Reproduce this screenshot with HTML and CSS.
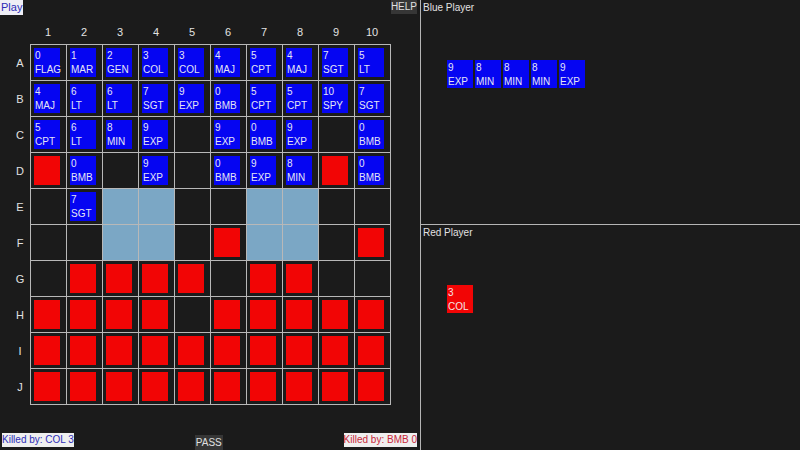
FILE: index.html
```html
<!DOCTYPE html>
<html>
<head>
<meta charset="utf-8">
<link rel="stylesheet" href="styles.css">
</head>
<body>
<div class="app">
  <div class="left">
    <div class="topbar">
      <span class="btn-play">Play</span>
      <span class="btn-dark">HELP</span>
    </div>
    <div class="colnums">
      <span>1</span><span>2</span><span>3</span><span>4</span><span>5</span><span>6</span><span>7</span><span>8</span><span>9</span><span>10</span>
    </div>
    <div class="boardwrap">
      <div class="rowlabels">
        <span>A</span><span>B</span><span>C</span><span>D</span><span>E</span><span>F</span><span>G</span><span>H</span><span>I</span><span>J</span>
      </div>
      <div class="board">
        <!-- A -->
        <div class="cell"><div class="piece blue">0<br>FLAG</div></div>
        <div class="cell"><div class="piece blue">1<br>MAR</div></div>
        <div class="cell"><div class="piece blue">2<br>GEN</div></div>
        <div class="cell"><div class="piece blue">3<br>COL</div></div>
        <div class="cell"><div class="piece blue">3<br>COL</div></div>
        <div class="cell"><div class="piece blue">4<br>MAJ</div></div>
        <div class="cell"><div class="piece blue">5<br>CPT</div></div>
        <div class="cell"><div class="piece blue">4<br>MAJ</div></div>
        <div class="cell"><div class="piece blue">7<br>SGT</div></div>
        <div class="cell"><div class="piece blue">5<br>LT</div></div>
        <!-- B -->
        <div class="cell"><div class="piece blue">4<br>MAJ</div></div>
        <div class="cell"><div class="piece blue">6<br>LT</div></div>
        <div class="cell"><div class="piece blue">6<br>LT</div></div>
        <div class="cell"><div class="piece blue">7<br>SGT</div></div>
        <div class="cell"><div class="piece blue">9<br>EXP</div></div>
        <div class="cell"><div class="piece blue">0<br>BMB</div></div>
        <div class="cell"><div class="piece blue">5<br>CPT</div></div>
        <div class="cell"><div class="piece blue">5<br>CPT</div></div>
        <div class="cell"><div class="piece blue">10<br>SPY</div></div>
        <div class="cell"><div class="piece blue">7<br>SGT</div></div>
        <!-- C -->
        <div class="cell"><div class="piece blue">5<br>CPT</div></div>
        <div class="cell"><div class="piece blue">6<br>LT</div></div>
        <div class="cell"><div class="piece blue">8<br>MIN</div></div>
        <div class="cell"><div class="piece blue">9<br>EXP</div></div>
        <div class="cell"></div>
        <div class="cell"><div class="piece blue">9<br>EXP</div></div>
        <div class="cell"><div class="piece blue">0<br>BMB</div></div>
        <div class="cell"><div class="piece blue">9<br>EXP</div></div>
        <div class="cell"></div>
        <div class="cell"><div class="piece blue">0<br>BMB</div></div>
        <!-- D -->
        <div class="cell"><div class="piece red"></div></div>
        <div class="cell"><div class="piece blue">0<br>BMB</div></div>
        <div class="cell"></div>
        <div class="cell"><div class="piece blue">9<br>EXP</div></div>
        <div class="cell"></div>
        <div class="cell"><div class="piece blue">0<br>BMB</div></div>
        <div class="cell"><div class="piece blue">9<br>EXP</div></div>
        <div class="cell"><div class="piece blue">8<br>MIN</div></div>
        <div class="cell"><div class="piece red"></div></div>
        <div class="cell"><div class="piece blue">0<br>BMB</div></div>
        <!-- E -->
        <div class="cell"></div>
        <div class="cell"><div class="piece blue">7<br>SGT</div></div>
        <div class="cell lake"></div>
        <div class="cell lake"></div>
        <div class="cell"></div>
        <div class="cell"></div>
        <div class="cell lake"></div>
        <div class="cell lake"></div>
        <div class="cell"></div>
        <div class="cell"></div>
        <!-- F -->
        <div class="cell"></div>
        <div class="cell"></div>
        <div class="cell lake"></div>
        <div class="cell lake"></div>
        <div class="cell"></div>
        <div class="cell"><div class="piece red"></div></div>
        <div class="cell lake"></div>
        <div class="cell lake"></div>
        <div class="cell"></div>
        <div class="cell"><div class="piece red"></div></div>
        <!-- G -->
        <div class="cell"></div>
        <div class="cell"><div class="piece red"></div></div>
        <div class="cell"><div class="piece red"></div></div>
        <div class="cell"><div class="piece red"></div></div>
        <div class="cell"><div class="piece red"></div></div>
        <div class="cell"></div>
        <div class="cell"><div class="piece red"></div></div>
        <div class="cell"><div class="piece red"></div></div>
        <div class="cell"></div>
        <div class="cell"></div>
        <!-- H -->
        <div class="cell"><div class="piece red"></div></div>
        <div class="cell"><div class="piece red"></div></div>
        <div class="cell"><div class="piece red"></div></div>
        <div class="cell"><div class="piece red"></div></div>
        <div class="cell"></div>
        <div class="cell"><div class="piece red"></div></div>
        <div class="cell"><div class="piece red"></div></div>
        <div class="cell"><div class="piece red"></div></div>
        <div class="cell"><div class="piece red"></div></div>
        <div class="cell"><div class="piece red"></div></div>
        <!-- I -->
        <div class="cell"><div class="piece red"></div></div>
        <div class="cell"><div class="piece red"></div></div>
        <div class="cell"><div class="piece red"></div></div>
        <div class="cell"><div class="piece red"></div></div>
        <div class="cell"><div class="piece red"></div></div>
        <div class="cell"><div class="piece red"></div></div>
        <div class="cell"><div class="piece red"></div></div>
        <div class="cell"><div class="piece red"></div></div>
        <div class="cell"><div class="piece red"></div></div>
        <div class="cell"><div class="piece red"></div></div>
        <!-- J -->
        <div class="cell"><div class="piece red"></div></div>
        <div class="cell"><div class="piece red"></div></div>
        <div class="cell"><div class="piece red"></div></div>
        <div class="cell"><div class="piece red"></div></div>
        <div class="cell"><div class="piece red"></div></div>
        <div class="cell"><div class="piece red"></div></div>
        <div class="cell"><div class="piece red"></div></div>
        <div class="cell"><div class="piece red"></div></div>
        <div class="cell"><div class="piece red"></div></div>
        <div class="cell"><div class="piece red"></div></div>
      </div>
    </div>
    <div class="bottombar">
      <span class="killed killed-blue">Killed by: COL 3</span>
      <span class="btn-dark btn-pass">PASS</span>
      <span class="killed killed-red">Killed by: BMB 0</span>
    </div>
  </div>
  <div class="right">
    <div class="panel panel-top">
      <div class="panel-title">Blue Player</div>
      <div class="captured">
        <div class="piece blue">9<br>EXP</div>
        <div class="piece blue">8<br>MIN</div>
        <div class="piece blue">8<br>MIN</div>
        <div class="piece blue">8<br>MIN</div>
        <div class="piece blue">9<br>EXP</div>
      </div>
    </div>
    <div class="panel">
      <div class="panel-title">Red Player</div>
      <div class="captured">
        <div class="piece red">3<br>COL</div>
      </div>
    </div>
  </div>
</div>
</body>
</html>
```

FILE: styles.css
```css
html, body {
  margin: 0;
  padding: 0;
  background: #1b1b1b;
}

body {
  width: 800px;
  height: 450px;
  overflow: hidden;
  font-family: "Liberation Sans", Arial, sans-serif;
  font-size: 10px;
  color: #e2e2e2;
}

.app {
  display: flex;
  height: 450px;
}

.left {
  width: 420px;
  height: 450px;
  border-right: 1px solid #b5b5b5;
  display: flex;
  flex-direction: column;
}

.topbar {
  height: 20px;
  display: flex;
  justify-content: space-between;
  align-items: flex-start;
  padding-right: 3px;
}

.btn-play {
  background: #eeeef6;
  color: #2b2bb5;
  font-size: 11px;
  line-height: 15px;
  height: 15px;
  padding: 0 1px;
}

.btn-dark {
  background: #363636;
  color: #e0e0e0;
  line-height: 14px;
  height: 14px;
}

.colnums {
  height: 24px;
  display: flex;
  padding-left: 30px;
  font-size: 11px;
}

.colnums span {
  width: 36px;
  text-align: center;
  line-height: 24px;
}

.boardwrap {
  display: flex;
}

.rowlabels {
  width: 30px;
  display: flex;
  flex-direction: column;
  padding-top: 1px;
  font-size: 11px;
}

.rowlabels span {
  height: 36px;
  line-height: 36px;
  width: 20px;
  margin-left: 10px;
  text-align: center;
}

.board {
  display: grid;
  grid-template-columns: repeat(10, 35px);
  grid-template-rows: repeat(10, 35px);
  gap: 1px;
  padding: 1px;
  background: #b8b8b8;
}

.cell {
  background: #1b1b1b;
}

.cell.lake {
  background: #7ba7c5;
}

.cell .piece {
  margin: 3px 0 0 3px;
}

.piece {
  width: 26px;
  height: 29px;
  box-sizing: border-box;
  padding-left: 1px;
  padding-top: 1px;
  line-height: 14px;
  color: #e4e4f4;
  white-space: nowrap;
}

.piece.blue {
  background: #0505f2;
}

.piece.red {
  background: #f20505;
  color: #f4e4e4;
}

.bottombar {
  margin-top: auto;
  height: 18px;
  display: flex;
  justify-content: space-between;
  align-items: flex-start;
  padding: 0 3px 0 2px;
}

.killed {
  background: #efefef;
  line-height: 14px;
  height: 14px;
  margin-top: 1px;
}

.killed-blue {
  color: #2e2eb8;
}

.killed-red {
  color: #c8283a;
}

.btn-pass {
  margin-top: 3px;
  height: 15px;
  line-height: 16px;
  padding: 0 1px;
}

.right {
  flex: 1;
  display: flex;
  flex-direction: column;
}

.panel {
  flex: 1;
}

.panel-top {
  flex: none;
  height: 224px;
  border-bottom: 1px solid #b5b5b5;
}

.panel-title {
  padding-left: 2px;
  line-height: 16px;
  height: 16px;
}

.captured {
  display: flex;
  gap: 2px;
  margin: 44px 0 0 26px;
}

.captured .piece {
  height: 28px;
}
```
